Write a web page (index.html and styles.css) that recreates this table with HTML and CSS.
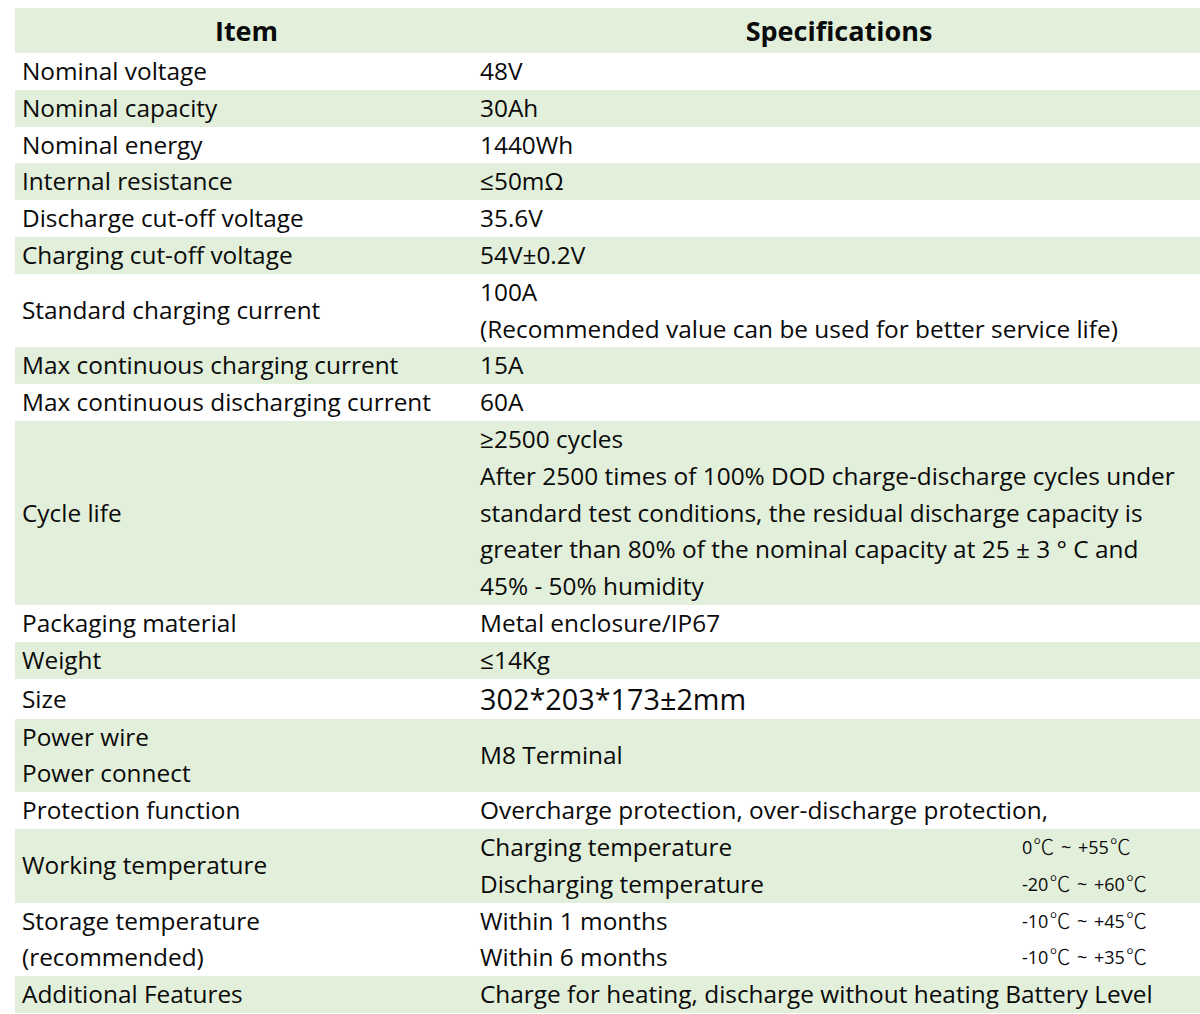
FILE: index.html
```html
<!DOCTYPE html>
<html lang="en">
<head>
<meta charset="utf-8">
<title>Battery Specifications</title>
<link rel="stylesheet" href="styles.css">
</head>
<body>
<table class="spec">
  <colgroup>
    <col class="c-item">
    <col class="c-spec">
    <col class="c-val">
  </colgroup>
  <thead>
    <tr class="g hdr">
      <th>Item</th>
      <th colspan="2">Specifications</th>
    </tr>
  </thead>
  <tbody>
    <tr><td class="item">Nominal voltage</td><td class="val" colspan="2">48V</td></tr>
    <tr class="g"><td class="item">Nominal capacity</td><td class="val" colspan="2">30Ah</td></tr>
    <tr><td class="item">Nominal energy</td><td class="val" colspan="2">1440Wh</td></tr>
    <tr class="g"><td class="item">Internal resistance</td><td class="val" colspan="2">≤50mΩ</td></tr>
    <tr><td class="item">Discharge cut-off voltage</td><td class="val" colspan="2">35.6V</td></tr>
    <tr class="g"><td class="item">Charging cut-off voltage</td><td class="val" colspan="2">54V±0.2V</td></tr>
    <tr><td class="item">Standard charging current</td><td class="val" colspan="2">100A<br>(Recommended value can be used for better service life)</td></tr>
    <tr class="g"><td class="item">Max continuous charging current</td><td class="val" colspan="2">15A</td></tr>
    <tr><td class="item">Max continuous discharging current</td><td class="val" colspan="2">60A</td></tr>
    <tr class="g"><td class="item">Cycle life</td><td class="val" colspan="2">≥2500 cycles<br>After 2500 times of 100% DOD charge-discharge cycles under<br>standard test conditions, the residual discharge capacity is<br>greater than 80% of the nominal capacity at 25 ± 3 ° C and<br>45% - 50% humidity</td></tr>
    <tr><td class="item">Packaging material</td><td class="val" colspan="2">Metal enclosure/IP67</td></tr>
    <tr class="g"><td class="item">Weight</td><td class="val" colspan="2">≤14Kg</td></tr>
    <tr class="size"><td class="item">Size</td><td class="val big" colspan="2">302*203*173±2mm</td></tr>
    <tr class="g"><td class="item">Power wire<br>Power connect</td><td class="val" colspan="2">M8 Terminal</td></tr>
    <tr><td class="item">Protection function</td><td class="val" colspan="2">Overcharge protection, over-discharge protection,</td></tr>
    <tr class="g"><td class="item" rowspan="2">Working temperature</td><td class="val">Charging temperature</td><td class="temp">0<span class="deg">℃</span> ~ +55<span class="deg">℃</span></td></tr>
    <tr class="g"><td class="val">Discharging temperature</td><td class="temp">-20<span class="deg">℃</span> ~ +60<span class="deg">℃</span></td></tr>
    <tr><td class="item" rowspan="2">Storage temperature<br>(recommended)</td><td class="val">Within 1 months</td><td class="temp">-10<span class="deg">℃</span> ~ +45<span class="deg">℃</span></td></tr>
    <tr><td class="val">Within 6 months</td><td class="temp">-10<span class="deg">℃</span> ~ +35<span class="deg">℃</span></td></tr>
    <tr class="g"><td class="item">Additional Features</td><td class="val" colspan="2">Charge for heating, discharge without heating Battery Level</td></tr>
  </tbody>
</table>
</body>
</html>
```

FILE: styles.css
```css
html, body {
  margin: 0;
  padding: 0;
  background: #ffffff;
}

body {
  font-family: "Open Sans", "Noto Sans", sans-serif;
  color: #0a0a0a;
  overflow: hidden;
}

.spec {
  margin: 8px 0 0 15px;
  border-collapse: collapse;
  border-spacing: 0;
  table-layout: fixed;
  width: 1185px;
}

.c-item { width: 463px; }
.c-spec { width: 542px; }
.c-val  { width: 180px; }

.spec th,
.spec td {
  padding: 0;
  vertical-align: middle;
  white-space: nowrap;
  text-align: left;
  overflow: hidden;
}

.spec td {
  font-size: 24.4px;
  line-height: 36.8px;
}

.spec td.item {
  padding-left: 7px;
}

.spec td.val {
  padding-left: 2px;
}

.spec tr.g {
  background: #e2efda;
}

.hdr th {
  height: 45px;
  font-size: 27px;
  font-weight: 700;
  text-align: center;
  line-height: 45px;
}

.size td {
  line-height: 40px;
}

.spec td.big {
  font-size: 28.8px;
}

.spec td.temp {
  height: 36.8px;
  padding-left: 2px;
  font-size: 18px;
  line-height: 36.8px;
  word-spacing: 2px;
}

.deg {
  font-family: "Noto Sans CJK SC", sans-serif;
  font-size: 21px;
  font-weight: 300;
  line-height: 0;
  margin-left: 1px;
}
```
